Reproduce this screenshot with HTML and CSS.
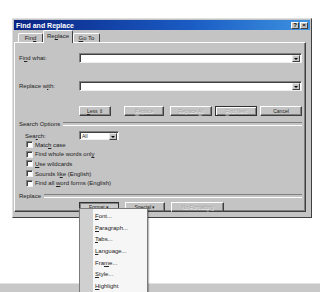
FILE: index.html
```html
<!DOCTYPE html>
<html lang="en">
<head>
  <meta charset="UTF-8" />
  <title>Find and Replace</title>
  <link rel="stylesheet" href="styles.css">
</head>
<body>
  <div class="desktop">
    <div class="dialog">
      <div class="titlebar">
        <span class="title">Find and Replace</span>
        <div class="caption-btns">
          <span class="cap-btn">?</span>
          <span class="cap-btn">&#215;</span>
        </div>
      </div>

      <div class="body">
        <div class="tabs">
          <div class="tab tab-find">Fin<u>d</u></div>
          <div class="tab tab-replace active">Re<u>p</u>lace</div>
          <div class="tab tab-goto"><u>G</u>o To</div>
        </div>

        <div class="pane">
          <div class="field-row first">
            <label>Fi<u>n</u>d what:</label>
            <div class="combo wide"><span class="drop-btn"></span></div>
          </div>
          <div class="field-row second">
            <label>Replace w<u>i</u>th:</label>
            <div class="combo wide"><span class="drop-btn"></span></div>
          </div>

          <div class="btn-row top-btns">
            <span class="btn btn-less"><span><u>L</u>ess &#8661;</span></span>
            <span class="btn btn-replace disabled"><span><u>R</u>eplace</span></span>
            <span class="btn btn-all disabled"><span>Replace <u>A</u>ll</span></span>
            <span class="btn btn-next default disabled"><span><u>F</u>ind Next</span></span>
            <span class="btn btn-cancel"><span>Cancel</span></span>
          </div>

          <div class="group-title">Search Options</div>
          <div class="search-row">
            <label>Sea<u>r</u>ch:</label>
            <div class="combo small"><span class="combo-text">All</span><span class="drop-btn"></span></div>
          </div>

          <div class="checks">
            <div class="check"><span class="box"></span><span>Matc<u>h</u> case</span></div>
            <div class="check"><span class="box"></span><span>Find whole words onl<u>y</u></span></div>
            <div class="check"><span class="box"></span><span><u>U</u>se wildcards</span></div>
            <div class="check"><span class="box"></span><span>Sounds li<u>k</u>e (English)</span></div>
            <div class="check"><span class="box"></span><span>Find all <u>w</u>ord forms (English)</span></div>
          </div>

          <div class="group-title">Replace</div>
          <div class="btn-row bottom-btns">
            <span class="btn btn-format pressed"><span>F<u>o</u>rmat &#9662;</span></span>
            <span class="btn btn-special"><span>Sp<u>e</u>cial &#9662;</span></span>
            <span class="btn btn-noformat disabled"><span>No Formatt<u>i</u>ng</span></span>
          </div>
        </div>
      </div>
    </div>
  </div>

  <div class="taskbar"></div>

  <div class="menu">
    <div class="menu-item"><u>F</u>ont...</div>
    <div class="menu-item"><u>P</u>aragraph...</div>
    <div class="menu-item"><u>T</u>abs...</div>
    <div class="menu-item"><u>L</u>anguage...</div>
    <div class="menu-item">Fra<u>m</u>e...</div>
    <div class="menu-item"><u>S</u>tyle...</div>
    <div class="menu-item"><u>H</u>ighlight</div>
  </div>
</body>
</html>
```

FILE: styles.css
```css
:root {
  --face: #c4c4c4;
  --shadow: #808080;
  --dark: #404040;
  --light: #ffffff;
  --text: #222222;
  --muted: #a2a2a2;
}

* {
  box-sizing: border-box;
  margin: 0;
  padding: 0;
}

body {
  width: 320px;
  height: 292px;
  overflow: hidden;
  position: relative;
  background: #ffffff;
  font-family: 'Liberation Sans', Arial, sans-serif;
  font-size: 6px;
  color: var(--text);
}

u {
  text-decoration-thickness: 0.5px;
  text-underline-offset: 1px;
}

.desktop {
  height: 283px;
  padding: 18px 0 0 12px;
}

.dialog {
  width: 300px;
  height: 200px;
  background: var(--face);
  border: 1px solid;
  border-color: #e0e0e0 var(--dark) var(--dark) #e0e0e0;
  padding: 1px;
}

.titlebar {
  height: 10px;
  display: flex;
  align-items: center;
  justify-content: space-between;
  padding: 0 2px;
  background: linear-gradient(90deg, #0a2484, #1a5cc4 60%, #3d92e0);
}

.title {
  color: #ffffff;
  font-weight: bold;
  font-size: 7px;
}

.caption-btns {
  display: flex;
  gap: 1px;
}

.cap-btn {
  width: 8px;
  height: 7px;
  background: var(--face);
  border: 1px solid;
  border-color: var(--light) var(--dark) var(--dark) var(--light);
  font-size: 6px;
  font-weight: bold;
  line-height: 5px;
  text-align: center;
  color: #000;
}

.body {
  padding: 0 4px 0 0;
}

.tabs {
  display: flex;
  height: 12px;
  padding-left: 4px;
}

.tab {
  margin-top: 3px;
  height: 9px;
  border: 1px solid;
  border-bottom: none;
  border-color: var(--light) var(--dark) transparent var(--light);
  border-radius: 2px 2px 0 0;
  text-align: center;
  line-height: 8px;
}

.tab-find { width: 25px; }
.tab-replace { width: 30px; }
.tab-goto { width: 27px; }

.tab.active {
  margin-top: 0;
  height: 13px;
  line-height: 11px;
  background: var(--face);
  position: relative;
  z-index: 1;
}

.pane {
  height: 170px;
  border: 1px solid;
  border-color: var(--light) var(--dark) var(--dark) var(--light);
  box-shadow: inset -1px -1px var(--shadow);
  padding: 0 3px 0 4px;
}

.field-row {
  display: flex;
  align-items: center;
  height: 10px;
}

.field-row.first { margin-top: 10px; }
.field-row.second { margin-top: 18px; }

.field-row label {
  width: 60px;
}

.combo {
  height: 10px;
  background: #ffffff;
  border: 1px solid;
  border-color: var(--shadow) #f0f0f0 #f0f0f0 var(--shadow);
  box-shadow: inset 1px 1px var(--dark);
  display: flex;
  justify-content: flex-end;
  align-items: center;
  padding: 1px 1px 0 2px;
}

.combo.wide { width: 223px; }

.combo.small {
  width: 40px;
  height: 9px;
  justify-content: space-between;
}

.combo-text {
  font-size: 5px;
}

.drop-btn {
  width: 8px;
  height: 7px;
  background: var(--face);
  border: 1px solid;
  border-color: #e8e8e8 var(--dark) var(--dark) #e8e8e8;
  position: relative;
}

.drop-btn::after {
  content: '';
  position: absolute;
  left: 1px;
  top: 2px;
  border-left: 2px solid transparent;
  border-right: 2px solid transparent;
  border-top: 2px solid #000;
}

.btn-row {
  display: flex;
  height: 10px;
  padding-left: 60px;
}

.top-btns { margin-top: 15px; }
.bottom-btns { margin-top: 2px; }

.btn {
  height: 10px;
  display: flex;
  align-items: center;
  justify-content: center;
  background: var(--face);
  border: 1px solid;
  border-color: var(--light) var(--dark) var(--dark) var(--light);
  box-shadow: inset -1px -1px var(--shadow);
  font-size: 5px;
  white-space: nowrap;
}

.btn.disabled {
  color: var(--muted);
  text-shadow: 0.5px 0.5px #f4f4f4;
}

.btn.default {
  border-color: #303030;
  box-shadow: inset 1px 1px var(--light), inset -1px -1px var(--shadow);
}

.btn.pressed {
  border-color: #303030;
  box-shadow: inset 1px 1px var(--shadow);
  background: #cacaca;
}

.btn-less { width: 32px; }
.btn-replace { width: 40px; margin-left: 13px; }
.btn-all { width: 42px; margin-left: 6px; }
.btn-next { width: 42px; margin-left: 3px; }
.btn-cancel { width: 42px; margin-left: 3px; }

.btn-format { width: 40px; }
.btn-special { width: 40px; margin-left: 6px; }
.btn-noformat { width: 53px; margin-left: 6px; }

.group-title {
  height: 8px;
  display: flex;
  align-items: center;
  gap: 3px;
  margin-top: 4px;
}

.group-title::after {
  content: '';
  flex: 1;
  height: 2px;
  border-top: 1px solid var(--shadow);
  border-bottom: 1px solid var(--light);
}

.search-row {
  display: flex;
  align-items: center;
  height: 9px;
  margin-top: 3px;
  padding-left: 6px;
}

.search-row label {
  width: 54px;
}

.checks {
  padding-left: 7px;
}

.check {
  height: 9.6px;
  display: flex;
  align-items: center;
  gap: 2px;
}

.box {
  width: 7px;
  height: 7px;
  background: #ffffff;
  border: 1px solid;
  border-color: var(--shadow) #f0f0f0 #f0f0f0 var(--shadow);
  box-shadow: inset 1px 1px var(--dark);
}

.taskbar {
  height: 9px;
  background: #c8c8c8;
  border-top: 1px solid #e2e2e2;
}

.menu {
  position: absolute;
  left: 79px;
  top: 208px;
  width: 69px;
  height: 90px;
  padding-top: 2px;
  background: linear-gradient(90deg, #d0d0d0 13px, #f6f6f6 13px);
  border: 1px solid #7a7a7a;
  box-shadow: 1px 1px 1px rgba(0, 0, 0, 0.25);
  z-index: 5;
}

.menu-item {
  height: 11.7px;
  line-height: 11.7px;
  padding-left: 15px;
  font-size: 6px;
}
```
